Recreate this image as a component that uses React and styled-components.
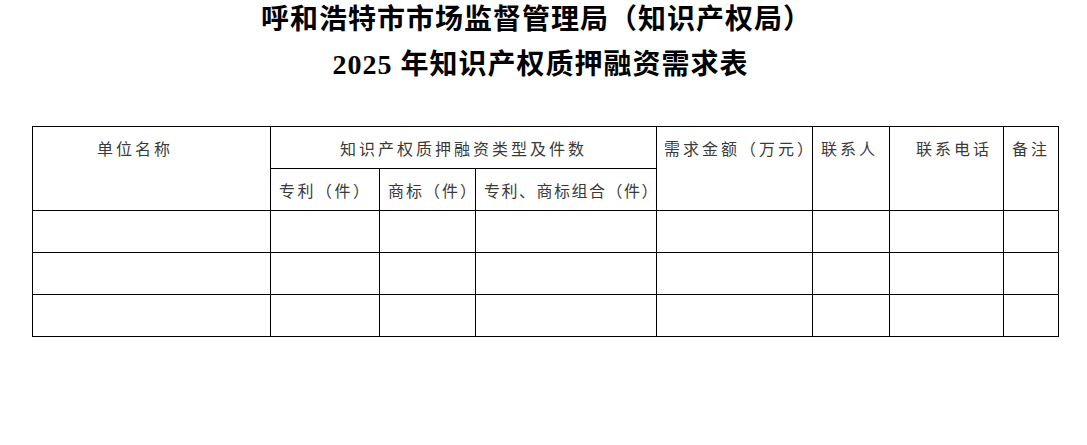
import styled, { createGlobalStyle } from "styled-components";

const GlobalStyle = createGlobalStyle`
  html, body {
    margin: 0;
    padding: 0;
    background: #fff;
  }
`;

const Page = styled.div`
  width: 1087px;
  height: 445px;
  overflow: hidden;
  background: #fff;
`;

const Heading = styled.header`
  display: flex;
  flex-direction: column;
  align-items: center;
  color: #000;
  font-family: "Liberation Serif", "Noto Sans CJK SC", serif;
  font-weight: 700;
  font-size: 28px;
  letter-spacing: 1px;
`;

const HeadLine = styled.div`
  height: ${(p) => p.$h}px;
  line-height: ${(p) => p.$h}px;
  white-space: nowrap;
  margin-left: ${(p) => p.$shift || 0}px;
`;

const Table = styled.table`
  margin: 36px 0 0 32px;
  width: 1027px;
  border-collapse: collapse;
  table-layout: fixed;
  font-family: "Noto Sans CJK SC", "Liberation Sans", sans-serif;
  font-size: 16px;
  color: #3a3a3a;
`;

const Cell = styled.td`
  border: 1px solid #000;
  height: 41px;
  padding: 0 0 0 ${(p) => p.$indent ?? 8}px;
  vertical-align: ${(p) => (p.$top ? "top" : "middle")};
  text-align: ${(p) => (p.$center ? "center" : "left")};
  letter-spacing: ${(p) => p.$ls ?? 3}px;
  white-space: nowrap;
  line-height: ${(p) => (p.$top ? "42px" : "normal")};
`;

const cols = [238, 109, 96, 181, 156, 77, 114, 55];
const rows = [0, 1, 2];

export default function App() {
  return (
    <Page>
      <GlobalStyle />
      <Heading>
        <HeadLine $h={40} $shift={-14}>
          呼和浩特市市场监督管理局（知识产权局）
        </HeadLine>
        <HeadLine $h={50} $shift={-6}>
          2025 年知识产权质押融资需求表
        </HeadLine>
      </Heading>
      <Table>
        <colgroup>
          {cols.map((w, i) => (
            <col key={i} style={{ width: w }} />
          ))}
        </colgroup>
        <tbody>
          <tr>
            <Cell rowSpan={2} $top $indent={64}>
              单位名称
            </Cell>
            <Cell colSpan={3} $center $indent={0}>
              知识产权质押融资类型及件数
            </Cell>
            <Cell rowSpan={2} $top $indent={7}>
              需求金额（万元）
            </Cell>
            <Cell rowSpan={2} $top>
              联系人
            </Cell>
            <Cell rowSpan={2} $top $indent={26}>
              联系电话
            </Cell>
            <Cell rowSpan={2} $top>
              备注
            </Cell>
          </tr>
          <tr>
            <Cell $ls={2.5}>专利（件）</Cell>
            <Cell $ls={2}>商标（件）</Cell>
            <Cell $ls={1.5}>专利、商标组合（件）</Cell>
          </tr>
          {rows.map((r) => (
            <tr key={r}>
              {cols.map((_, i) => (
                <Cell key={i} />
              ))}
            </tr>
          ))}
        </tbody>
      </Table>
    </Page>
  );
}
